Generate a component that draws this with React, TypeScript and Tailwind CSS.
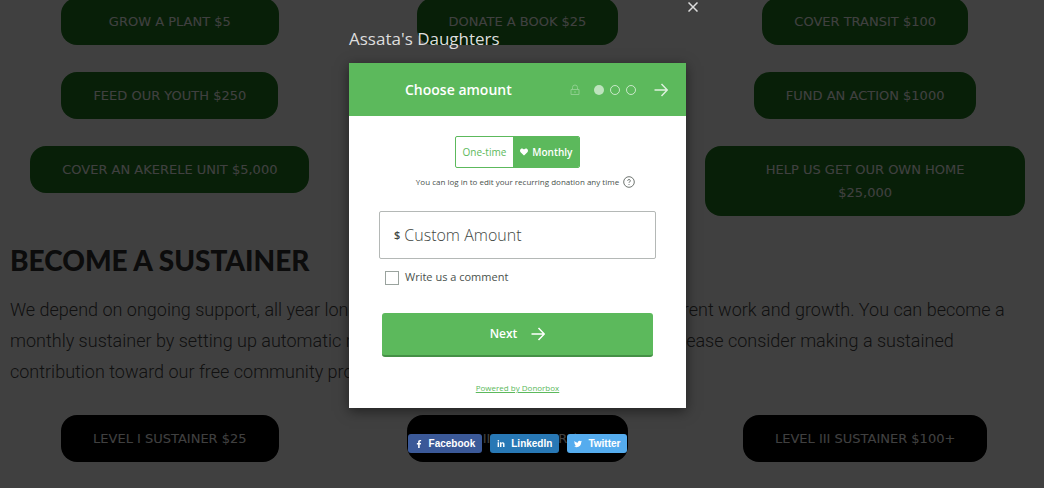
import React from 'react';
import { FaFacebookF, FaLinkedinIn, FaTwitter, FaHeart } from 'react-icons/fa';

const Arrow = ({ className }: { className?: string }) => (
  <svg className={className} width="14" height="14" viewBox="0 0 14 14" fill="none" stroke="currentColor" strokeWidth="1.5">
    <path d="M0.5 7H13M7.5 1L13.3 7L7.5 13" />
  </svg>
);

const PillButton = ({ label, tone, wide }: { label: string; tone: 'green' | 'black'; wide?: boolean }) => (
  <a
    href="#"
    className={`rounded-[16px] py-3 text-center font-['DejaVu_Sans',sans-serif] text-[13px] leading-[23px] text-white ${
      wide ? 'px-12' : 'px-8'
    } ${tone === 'green' ? 'bg-[#207c20]' : 'bg-black'}`}
  >
    {label}
  </a>
);

const App = () => {
  const giftColumns = [
    ['GROW A PLANT $5', 'FEED OUR YOUTH $250', 'COVER AN AKERELE UNIT $5,000'],
    ['DONATE A BOOK $25'],
    ['COVER TRANSIT $100', 'FUND AN ACTION $1000', 'HELP US GET OUR OWN HOME $25,000']
  ];
  const levels = ['LEVEL I SUSTAINER $25', 'LEVEL II SUSTAINER $50', 'LEVEL III SUSTAINER $100+'];

  return (
    <div className="relative min-h-screen overflow-hidden bg-white">
      {/* Page content */}
      <main className="pl-[10px] pr-[19px]">
        <section className="-mt-0.5 grid grid-cols-3 gap-7">
          {giftColumns.map((column, index) => (
            <div key={index} className="flex flex-col items-center gap-[27px]">
              {column.map((label) => (
                <PillButton key={label} label={label} tone="green" wide={label === 'GROW A PLANT $5'} />
              ))}
            </div>
          ))}
        </section>

        <section className="mt-[26px]">
          <h2 className="font-[Lato,sans-serif] text-[28px] font-black leading-9 text-[#303030]">BECOME A SUSTAINER</h2>
          <p className="mt-4 whitespace-nowrap font-[Roboto,sans-serif] text-[18px] font-light leading-[31px] text-[#444]">
            We depend on ongoing support, all year long, from every one of you, to sustain our current work and growth. You can become a
            <br />
            monthly sustainer by setting up automatic monthly donations using the form below. Please consider making a sustained
            <br />
            contribution toward our free community programs.
          </p>
        </section>

        <section className="mt-7 grid grid-cols-3 gap-7">
          {levels.map((label) => (
            <div key={label} className="flex justify-center">
              <PillButton label={label} tone="black" />
            </div>
          ))}
        </section>
      </main>

      {/* Donation dialog */}
      <div className="absolute inset-0 flex flex-col items-center bg-black/75 pr-[9px] font-['Open_Sans',sans-serif]">
        <div className="relative w-[337px]">
          <button type="button" aria-label="Close" className="absolute -right-3 top-0.5 text-[#ddd]">
            <svg width="10" height="10" viewBox="0 0 10 10" stroke="currentColor" strokeWidth="1.5">
              <path d="M0.5 0.5L9.5 9.5M9.5 0.5L0.5 9.5" />
            </svg>
          </button>

          <h1 className="pb-3 pt-[27px] text-[17px] leading-6 text-[#ddd]">Assata's Daughters</h1>

          <form className="bg-white shadow-[0_3px_12px_rgba(0,0,0,0.5)]">
            <header className="flex h-[53px] items-center bg-[#5cb95c] pl-14 pr-[18px] text-white">
              <h2 className="text-[14px] font-semibold leading-5">Choose amount</h2>
              <div className="ml-auto flex items-center gap-[6px]">
                <svg className="mr-2 opacity-30" width="10" height="12" viewBox="0 0 10 12" fill="none" stroke="currentColor">
                  <path d="M2.5 5V3.5a2.5 2.5 0 0 1 5 0V5M1 5.5h8v5H1zM5 7v2" />
                </svg>
                <span className="size-[10px] rounded-full bg-white/60"></span>
                <span className="size-[10px] rounded-full border border-white/65"></span>
                <span className="size-[10px] rounded-full border border-white/65"></span>
                <button type="button" aria-label="Next step" className="ml-3">
                  <Arrow className="opacity-80" />
                </button>
              </div>
            </header>

            <div className="flex flex-col px-[30px] pb-[14px] pt-5">
              <div className="flex h-8 self-center overflow-hidden rounded-[2px] border border-[#5cb95c] text-[10px] leading-4">
                <button type="button" className="px-[7px] text-[#5cb95c]">One-time</button>
                <button type="button" className="flex items-center gap-1 bg-[#5cb95c] px-[7px] font-semibold text-white">
                  <FaHeart size={8} />
                  Monthly
                </button>
              </div>

              <p className="mt-2 flex items-center justify-center gap-1 pl-4 text-[8px] leading-3 text-[#4a524d]">
                You can log in to edit your recurring donation any time
                <svg width="12" height="12" viewBox="0 0 12 12" fill="none" stroke="#4a524d" strokeWidth="0.8">
                  <circle cx="6" cy="6" r="5.3" />
                  <path d="M4.7 4.8a1.3 1.3 0 1 1 1.9 1.1c-.4.2-.6.4-.6 1M6 8v.9" />
                </svg>
              </p>

              <label className="mt-[23px] flex h-12 items-center gap-1 rounded-[2px] border border-[#b4b8b6] px-3 text-[#3f4743]">
                <span className="pl-0.5 text-[11px] font-semibold">$</span>
                <input
                  type="text"
                  aria-label="Custom Amount"
                  placeholder="Custom Amount"
                  className="w-full text-[16px] font-light outline-none placeholder:text-[#3f4743]"
                />
              </label>

              <label className="mt-[10px] flex items-center gap-[6px] pl-[6px] text-[11px] leading-4 text-[#4a524d]">
                <input type="checkbox" className="mt-0.5 size-[14px] appearance-none border border-[#9aa39e]" />
                Write us a comment
              </label>

              <button
                type="button"
                className="mx-[3px] mt-[28px] flex h-11 items-center justify-center gap-[14px] rounded-[3px] border-b-2 border-[#459046] bg-[#5cb95c] text-[12px] font-semibold text-white"
              >
                Next
                <Arrow />
              </button>

              <a href="#" className="mt-[25px] self-center text-[8px] leading-3 text-[#5cb95c] underline">Powered by Donorbox</a>
            </div>
          </form>
        </div>

        {/* Share buttons */}
        <div className="mt-[26px] flex gap-2 font-['Liberation_Sans',sans-serif] text-[10px] font-bold leading-[19px] text-white">
          <button type="button" className="flex items-center gap-[6px] rounded-[3px] bg-[#3b5998] px-[7px]">
            <FaFacebookF size={8} />
            Facebook
          </button>
          <button type="button" className="flex items-center gap-[6px] rounded-[3px] bg-[#2878b5] px-[7px]">
            <FaLinkedinIn size={8} />
            LinkedIn
          </button>
          <button type="button" className="flex items-center gap-[6px] rounded-[3px] bg-[#55acee] px-[7px]">
            <FaTwitter size={8} />
            Twitter
          </button>
        </div>
      </div>
    </div>
  );
};

export default App;
